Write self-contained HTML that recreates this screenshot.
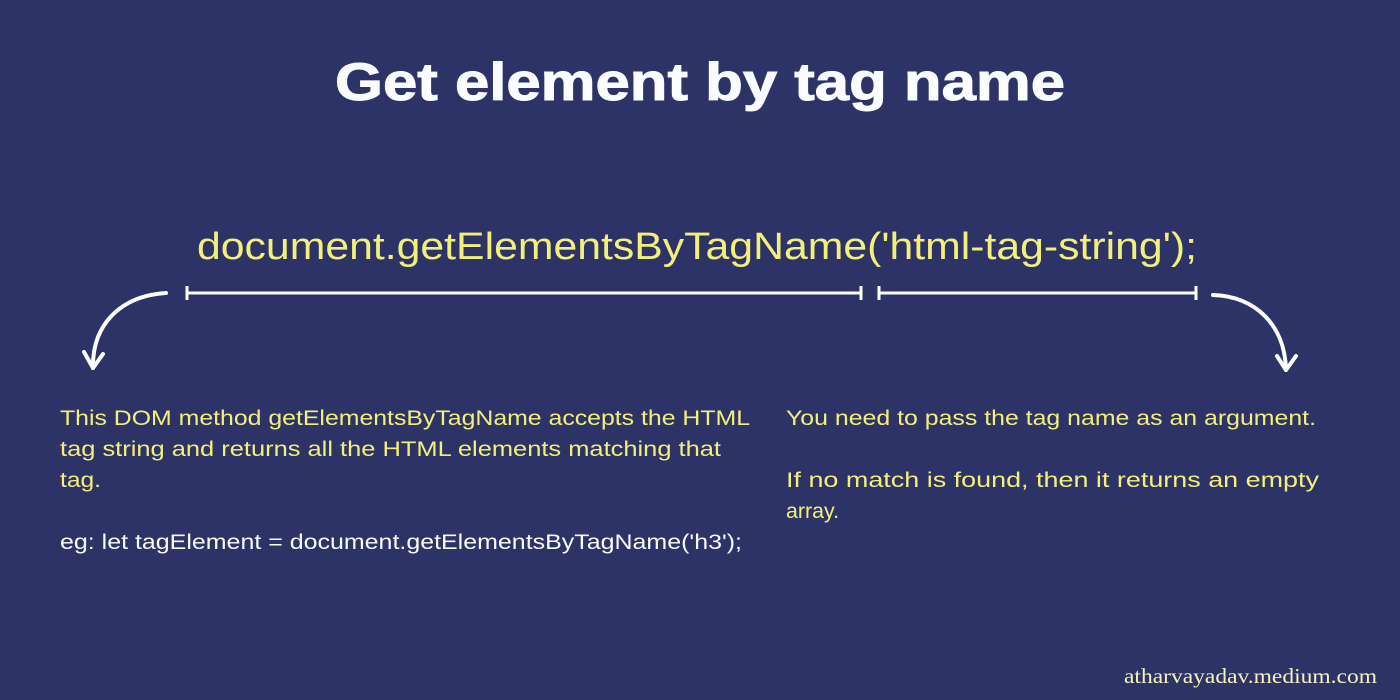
<!DOCTYPE html>
<html><head><meta charset="utf-8"><style>
html,body{margin:0;padding:0;background:#2d3366;width:1400px;height:700px;overflow:hidden}
svg{display:block}
</style></head><body>
<svg width="1400" height="700" viewBox="0 0 1400 700" xmlns="http://www.w3.org/2000/svg">
<rect width="1400" height="700" fill="#2d3366"/>
<text x="335" y="100" font-family="Liberation Sans, sans-serif" font-weight="bold" font-size="53" fill="#fbfcff" stroke="#fbfcff" stroke-width="1" textLength="730" lengthAdjust="spacingAndGlyphs">Get element by tag name</text>
<text x="197" y="259" font-family="Liberation Sans, sans-serif" font-size="38" fill="#f3f07a" textLength="1000" lengthAdjust="spacingAndGlyphs">document.getElementsByTagName('html-tag-string');</text>
<g stroke="#fff" stroke-width="3" fill="none">
<line x1="187" y1="293" x2="861" y2="293"/>
<line x1="187" y1="286" x2="187" y2="300"/>
<line x1="861" y1="286" x2="861" y2="300"/>
<line x1="879" y1="293" x2="1196" y2="293"/>
<line x1="879" y1="286" x2="879" y2="300"/>
<line x1="1196" y1="286" x2="1196" y2="300"/>
</g>
<g stroke="#fff" stroke-width="4" fill="none" stroke-linecap="round" stroke-linejoin="round">
<path d="M166 293 C120 296 92 325 93 368"/>
<path d="M84 352 L93 368 L103 354"/>
<path d="M1213 295 C1255 296 1285 325 1286 370"/>
<path d="M1277 356 L1286 370 L1296 356"/>
</g>
<g font-family="Liberation Sans, sans-serif" font-size="21" fill="#f3f07a">
<text x="60" y="425" textLength="690" lengthAdjust="spacingAndGlyphs">This DOM method getElementsByTagName accepts the HTML</text>
<text x="60" y="456" textLength="661" lengthAdjust="spacingAndGlyphs">tag string and returns all the HTML elements matching that</text>
<text x="60" y="487" textLength="41" lengthAdjust="spacingAndGlyphs">tag.</text>
<text x="60" y="549" fill="#fbfcff" textLength="682" lengthAdjust="spacingAndGlyphs">eg: let tagElement = document.getElementsByTagName('h3');</text>
<text x="786" y="425" textLength="530" lengthAdjust="spacingAndGlyphs">You need to pass the tag name as an argument.</text>
<text x="786" y="487" textLength="533" lengthAdjust="spacingAndGlyphs">If no match is found, then it returns an empty</text>
<text x="786" y="518" textLength="53" lengthAdjust="spacingAndGlyphs">array.</text>
</g>
<text x="1124" y="683" font-family="Liberation Serif, serif" font-size="21" fill="#f4f3b8" textLength="253" lengthAdjust="spacingAndGlyphs">atharvayadav.medium.com</text>
</svg>
</body></html>
